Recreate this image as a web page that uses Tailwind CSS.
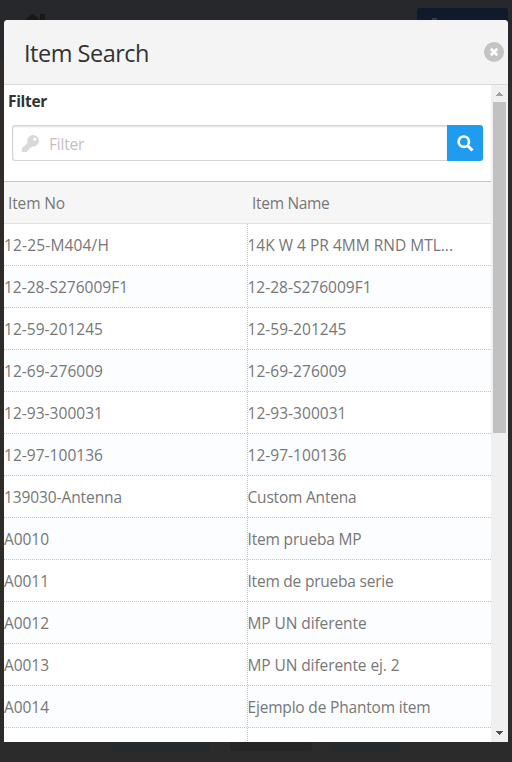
<!DOCTYPE html>
<html lang="en">
<head>
<meta charset="utf-8">
<title>Item Search</title>
<script src="https://cdn.jsdelivr.net/npm/@tailwindcss/browser@4"></script>
</head>
<body class="relative h-[762px] w-[512px] overflow-hidden bg-[#2b2b2b] pt-5 pl-1 font-['Segoe_UI','Open_Sans',sans-serif] text-[15.5px] text-[#777]">
  <!-- dimmed page behind the dialog -->
  <div class="absolute inset-x-0 top-0 h-[59px] bg-[#27282b]"></div>
  <div class="absolute top-[59px] left-0 h-[640px] w-1 bg-[#2e2b28]"></div>
  <svg class="absolute top-[13px] left-[22px]" width="26" height="20" viewBox="0 0 26 20" fill="#17181a"><path d="M0 10 8.500 2Q10.500 0 12.500 2L18 7V1h5v10l3 3H0z"/></svg>
  <div class="absolute top-2 left-[417px] h-10 w-[91px] rounded-[3px] bg-[#111a2b]"></div>
  <div class="absolute top-[18px] left-[432px] h-2 w-[5px] bg-[#343b48]"></div>
  <div class="absolute top-[710px] left-[111px] h-[41px] w-[99px] rounded bg-[#252b2c]"></div>
  <div class="absolute top-[710px] left-[230px] h-[41px] w-[82px] rounded bg-[#252525]"></div>
  <div class="absolute top-[710px] left-[332px] h-[41px] w-[69px] rounded bg-[#252b2c]"></div>

  <main class="relative flex h-[722px] w-[504px] flex-col overflow-hidden rounded-t-[4px] bg-white">
    <header class="flex h-[65px] shrink-0 items-center justify-between border-b border-[#d9d9d9] bg-[#f4f4f4] pl-5 pr-1">
      <h1 class="pt-[3px] text-[23.5px] text-[#333]"><span data-w="125" class="inline-block whitespace-nowrap">Item Search</span></h1>
      <svg width="20" height="20" viewBox="0 0 20 20"><circle cx="10" cy="10" r="10" fill="#c4c4c4"/><path d="m6.800 6.800 6.400 6.400m0-6.400-6.400 6.400" stroke="#fff" stroke-width="2.700"/></svg>
    </header>
    <div class="flex min-h-0 flex-1">
      <section class="w-[487px] overflow-hidden">
        <div class="h-10 pt-1 pl-1 text-[15.5px] leading-6 font-bold text-[#333]"><span data-w="39" class="inline-block whitespace-nowrap">Filter</span></div>
        <div class="mx-2 flex h-9">
          <label class="flex flex-1 items-center rounded-l-[3px] border border-r-0 border-[#d5d5d5] pl-[9px] shadow-[inset_0_1px_2px_#ddd]">
            <svg width="17" height="17" viewBox="0 0 512 512" fill="#d9d9d9"><path d="M512 176a176 176 0 0 1-209 173l-24 27a24 24 0 0 1-18 8h-37v40a24 24 0 0 1-24 24h-40v40a24 24 0 0 1-24 24H24a24 24 0 0 1-24-24v-78a24 24 0 0 1 7-17l162-162A176 176 0 1 1 512 176zM336 128a48 48 0 1 0 96 0 48 48 0 0 0-96 0z"/></svg>
            <span class="ml-[10px] pt-1 text-[#c2c2c2]"><span data-w="35" class="inline-block whitespace-nowrap">Filter</span></span>
          </label>
          <button class="flex h-9 w-9 items-center justify-center rounded-r-[3px] bg-[#1f9cf0]">
            <svg width="17" height="17" viewBox="0 0 17 17" fill="none" stroke="#fff"><circle cx="6.800" cy="6.700" r="5.200" stroke-width="2.600"/><path d="m10.500 10.500 5 5" stroke-width="3"/></svg>
          </button>
        </div>
        <div class="mt-5 flex h-[43px] items-center border-t border-b border-t-[#c6c6c6] border-b-[#e0e0e0] bg-[#f6f6f6] pt-[3px]">
          <div class="w-[243px] pl-1"><span data-w="57" class="inline-block whitespace-nowrap">Item No</span></div>
          <div class="pl-[5px]"><span data-w="77.5" class="inline-block whitespace-nowrap">Item Name</span></div>
        </div>
        <div id="rows"></div>
      </section>
      <aside class="flex w-[17px] flex-col items-center bg-[#f0f0f0]">
        <svg class="shrink-0" width="17" height="17" viewBox="0 0 17 17" shape-rendering="crispEdges" fill="#a0a0a0"><path d="M5 11h7v-1h-1V9h-1V8H9V7H8v1H7v1H6v1H5z"/></svg>
        <div class="h-[331px] w-[13px] shrink-0 bg-[#c1c1c1]"></div>
        <svg class="mt-auto shrink-0" width="17" height="17" viewBox="0 0 17 17" shape-rendering="crispEdges" fill="#505050"><path d="M5 6h7v1h-1v1h-1v1H9v1H8V9H7V8H6V7H5z"/></svg>
      </aside>
    </div>
  </main>
  <script>
    const items = [
      ["12-25-M404/H", 105, "14K W 4 PR 4MM RND MTL...", 205.5],
      ["12-28-S276009F1", 124, "12-28-S276009F1", 124],
      ["12-59-201245", 99, "12-59-201245", 99],
      ["12-69-276009", 99, "12-69-276009", 99],
      ["12-93-300031", 99, "12-93-300031", 99],
      ["12-97-100136", 99, "12-97-100136", 99],
      ["139030-Antenna", 118, "Custom Antena", 109],
      ["A0010", 45, "Item prueba MP", 114],
      ["A0011", 45, "Item de prueba serie", 146],
      ["A0012", 45, "MP UN diferente", 119],
      ["A0013", 45, "MP UN diferente ej. 2", 152],
      ["A0014", 45, "Ejemplo de Phantom item", 183],
      ["", 0, "", 0]
    ];
    const label = (text, width) => `<span data-w="${width}" class="inline-block whitespace-nowrap">${text}</span>`;
    document.getElementById("rows").innerHTML = items.map(([no, noWidth, name, nameWidth]) => `
      <div class="flex h-[42px] border-b border-dotted border-[#c4c4c4] odd:bg-white even:bg-[#fbfdff]">
        <div class="flex w-[243px] items-center pt-[3px]">${label(no, noWidth)}</div>
        <div class="flex flex-1 items-center border-l border-dotted border-[#c4c4c4] pt-[3px]"><div class="-ml-[0.5px]">${label(name, nameWidth)}</div></div>
      </div>`).join("");
    // even out letter spacing so each label keeps its nominal width
    const fit = () => document.querySelectorAll("[data-w]").forEach((el) => {
      const n = el.textContent.length;
      if (!n) return;
      el.style.letterSpacing = "0px";
      el.style.letterSpacing = (Number(el.dataset.w) - el.getBoundingClientRect().width) / n + "px";
    });
    fit();
    addEventListener("load", fit);
    document.fonts.ready.then(fit);
  </script>
</body>
</html>
